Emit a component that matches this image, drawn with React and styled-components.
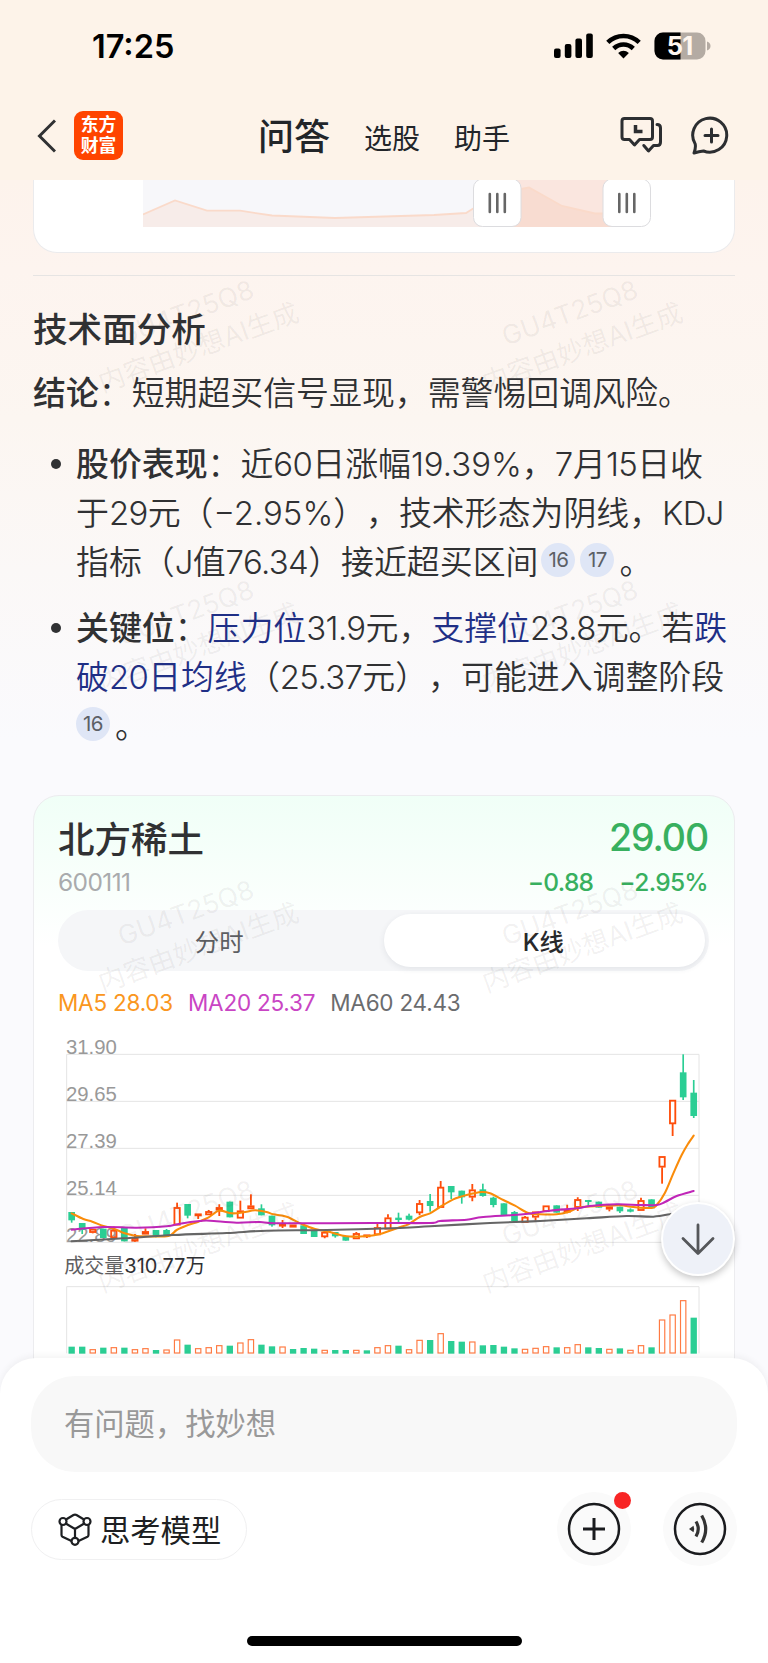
import React from "react";
import styled, { createGlobalStyle, css } from "styled-components";

const UP = "#ff4d0a";
const DOWN = "#2bce94";
const STEP = 31.63;

// [direction, body top, body bottom, high, low]
const candles = [
  ["d", 546, 571, 546, 578], ["d", 579, 600, 579, 612], ["u", 597, 608, 597, 610],
  ["d", 596, 624, 596, 624], ["u", 600, 624, 590, 624], ["d", 593, 634, 593, 634],
  ["u", 624, 634, 612, 636], ["u", 604, 613, 595, 613], ["d", 600, 618, 600, 622],
  ["d", 600, 616, 597, 616], ["u", 532, 586, 518, 586], ["d", 522, 557, 522, 565],
  ["u", 551, 557, 551, 567], ["u", 544, 555, 540, 555], ["u", 532, 541, 523, 558],
  ["d", 515, 562, 515, 562], ["u", 542, 565, 512, 565], ["u", 527, 537, 493, 537],
  ["d", 535, 556, 523, 556], ["d", 557, 586, 557, 590], ["u", 582, 588, 570, 594],
  ["u", 584, 592, 584, 592], ["d", 586, 612, 586, 612], ["d", 603, 621, 603, 621],
  ["u", 606, 621, 603, 625], ["d", 606, 619, 606, 623], ["d", 618, 632, 618, 632],
  ["u", 610, 627, 606, 627], ["u", 614, 620, 614, 624], ["u", 592, 615, 582, 615],
  ["u", 563, 598, 553, 598], ["d", 563, 570, 548, 577], ["d", 557, 569, 551, 571],
  ["u", 520, 549, 510, 556], ["d", 513, 528, 492, 545], ["u", 471, 533, 453, 533],
  ["d", 468, 487, 468, 507], ["d", 482, 502, 482, 521], ["u", 479, 502, 462, 514],
  ["d", 478, 498, 461, 500], ["d", 503, 525, 500, 532], ["d", 520, 556, 520, 556],
  ["d", 546, 573, 543, 573], ["u", 561, 578, 558, 578], ["u", 545, 562, 545, 572],
  ["u", 527, 545, 527, 545], ["d", 526, 548, 526, 548], ["u", 540, 547, 524, 550],
  ["u", 508, 533, 502, 543], ["d", 510, 516, 510, 528], ["d", 515, 533, 515, 533],
  ["u", 530, 538, 530, 544], ["d", 530, 544, 530, 549], ["d", 538, 545, 535, 547],
  ["u", 511, 542, 503, 542], ["d", 508, 535, 508, 535], ["u", 379, 412, 379, 461],
  ["u", 210, 282, 210, 318], ["d", 127, 202, 73, 210], ["d", 188, 258, 150, 264],
];

const volumes =
  "d951 d951 u958 d954 u952 d954 u958 u955 d961 u959 u929 d945 u955 u952 u946 d948 u938 u928 d945 d950 u950 d958 d955 d957 u960 d961 d961 u960 d962 u952 u946 d948 u958 u930 d931 u910 d934 d936 u935 d947 d946 d951 d956 u957 u954 u949 d953 u952 u943 d953 d955 u957 d956 u960 u946 d953 u869 u854 u811 d864"
    .split(" ")
    .map((v) => [v[0], Number(v.slice(1))]);

const ma5 = [
  [95, 550], [130, 567], [157, 575], [190, 588], [222, 596], [254, 610], [285, 617],
  [316, 619], [385, 618], [410, 600], [444, 585], [475, 575], [506, 562], [537, 542],
  [575, 550], [610, 547], [645, 541], [680, 546], [700, 553], [740, 560], [785, 582],
  [825, 597], [870, 606], [920, 619], [985, 618], [1020, 612], [1075, 593], [1105, 583],
  [1139, 561], [1170, 550], [1200, 531], [1240, 508], [1280, 495], [1325, 486],
  [1350, 490], [1390, 510], [1425, 527], [1465, 549], [1500, 553], [1550, 553],
  [1585, 546], [1620, 532], [1680, 528], [1740, 526], [1780, 531], [1835, 534],
  [1850, 525], [1875, 488], [1900, 430], [1925, 375], [1945, 340], [1961, 317],
];

const ma20 = [
  [95, 599], [190, 591], [290, 593], [380, 589], [420, 581], [480, 573], [510, 572],
  [590, 578], [660, 576], [720, 580], [1000, 579], [1170, 579], [1200, 573], [1280, 569],
  [1330, 561], [1450, 553], [1530, 542], [1610, 535], [1650, 528], [1730, 523],
  [1800, 525], [1850, 525], [1875, 516], [1910, 498], [1961, 483],
];

const ma60 = [
  [95, 634], [250, 625], [400, 615], [560, 609], [680, 602], [860, 600], [1080, 594],
  [1170, 589], [1350, 579], [1500, 573], [1640, 565], [1760, 558], [1840, 560],
  [1893, 552],
];

// Catmull-Rom to bezier
const smooth = (pts) =>
  pts.slice(1).reduce((d, p, i) => {
    const a = pts[i];
    const before = pts[i - 1] || a;
    const after = pts[i + 2] || p;
    const c1 = [a[0] + (p[0] - before[0]) / 6, a[1] + (p[1] - before[1]) / 6];
    const c2 = [p[0] - (after[0] - a[0]) / 6, p[1] - (after[1] - a[1]) / 6];
    return `${d}C${c1} ${c2} ${p}`;
  }, `M${pts[0]}`);

const GlobalStyle = createGlobalStyle`
  * { box-sizing: border-box; }
  body {
    margin: 0;
    background: #fff;
    color: #303133;
    font-family: Inter, "Noto Sans CJK SC", sans-serif;
    text-spacing-trim: space-all;
  }
`;

const Page = styled.div`
  position: relative;
  display: flex;
  flex-direction: column;
  width: 768px;
  height: 1663px;
  overflow: hidden;
  background: #fff;
`;

const Header = styled.header`
  height: 180px;
  background: #fdf3e9;
`;

const StatusBar = styled.div`
  display: flex;
  align-items: center;
  justify-content: space-between;
  height: 91px;
  padding: 0 57.5px 0 92px;
`;

const Clock = styled.span`
  padding-top: 2px;
  font-size: 32.5px;
  font-weight: 600;
  color: #000;
`;

const StatusIcons = styled.div`
  display: flex;
  align-items: center;
  gap: 12.5px;
`;

const NavBar = styled.nav`
  display: flex;
  align-items: center;
  height: 89px;
  padding: 0 36px;
`;

const Logo = styled.div`
  width: 49px;
  height: 49px;
  margin: 0 135px 0 18px;
  padding-top: 2px;
  border-radius: 9px;
  background: #ff4400;
  color: #fff;
  font: 700 17.8px/21px "Noto Sans CJK SC", sans-serif;
  text-align: center;
`;

const Tab = styled.span`
  margin-right: 34px;
  padding-top: 2px;
  font-size: 28px;
  color: #222529;
  ${(p) =>
    p.$active &&
    css`
      padding: 0 0 3px;
      font-size: 36px;
      font-weight: 500;
    `}
`;

const NavIcons = styled.div`
  display: flex;
  align-items: center;
  gap: 26px;
  margin-left: auto;
`;

const Content = styled.main`
  height: 1220px;
  padding: 0 33px;
  overflow: hidden;
  background: linear-gradient(#fdf3ec 0, #fdf4ef 90px, #fcf6f1 240px, #fbf8f7 390px, #fafafd 560px);
`;

const SliderCard = styled.section`
  height: 73px;
  padding-left: 109px;
  border: 1px solid #ebebed;
  border-top: 0;
  border-radius: 0 0 24px 24px;
  background: #fff;
`;

const Divider = styled.hr`
  height: 1px;
  margin: 22px 0 29px;
  border: 0;
  background: #e6e4e3;
`;

const Title = styled.h2`
  margin: 0 0 15px;
  font-size: 34.6px;
  font-weight: 500;
  line-height: 49px;
`;

const Line = styled.div`
  height: 49px;
  font-size: 32.9px;
  font-weight: 350;
  line-height: 49px;
  white-space: nowrap;

  b {
    font-weight: 500;
  }
`;

const Num = styled.span`
  letter-spacing: ${(p) => (p.$wide ? 0 : -0.6)}px;
`;

const List = styled.ul`
  display: grid;
  gap: 17px;
  margin: 22px 0 44px;
  padding: 0;
  list-style: none;
`;

const Item = styled.li`
  display: grid;
  grid-template-columns: 43px 1fr;

  &::before {
    content: "";
    width: 10px;
    height: 10px;
    margin: 19px 0 0 18px;
    border-radius: 50%;
    background: #303133;
  }
`;

const Keyword = styled.span`
  color: #1f2f86;
`;

const Cite = styled.span`
  display: inline-block;
  width: 34px;
  height: 34px;
  margin: 0 5px 0 ${(p) => (p.$lead ? 3 : 0)}px;
  border-radius: 50%;
  background: #dfe6f6;
  color: #5c6066;
  font-size: 20.5px;
  font-weight: 400;
  letter-spacing: -0.6px;
  line-height: 34px;
  text-align: center;
  vertical-align: 7px;
`;

const StockCard = styled.section`
  height: 640px;
  padding: 19px 26px 0 24px;
  border: 1px solid #ececef;
  border-radius: 26px;
  background: linear-gradient(#f0fff7 0, #f8fffb 80px, #fff 150px);
`;

const StockRow = styled.div`
  display: flex;
  align-items: center;
  justify-content: space-between;
  height: ${(p) => p.$height}px;
`;

const StockName = styled.span`
  font-size: 36.5px;
  font-weight: 500;
`;

const Price = styled.span`
  color: #38b05f;
  font-size: 37.5px;
  font-weight: 500;
  letter-spacing: -1.1px;
`;

const Code = styled.span`
  color: #a9abad;
  font-size: 24.5px;
  letter-spacing: -0.6px;
`;

const Change = styled.span`
  display: flex;
  gap: 26px;
  color: #38b05f;
  font-size: 24.5px;
  font-weight: 500;
  letter-spacing: -0.7px;
`;

const Segmented = styled.div`
  display: grid;
  grid-template-columns: 1fr 1fr;
  height: 61px;
  margin: 6px -1px 16px 0;
  padding: 4px;
  border-radius: 31px;
  background: #f5f6f8;
`;

const Segment = styled.span`
  display: grid;
  place-items: center;
  padding-right: 7px;
  border-radius: 27px;
  color: #5d5f63;
  font-size: 24.4px;
  ${(p) =>
    p.$active &&
    css`
      padding-right: 2px;
      background: #fff;
      color: #28292b;
      font-weight: 500;
      box-shadow: 0 2px 6px rgba(40, 50, 80, 0.09);
    `}
`;

const Legend = styled.div`
  display: flex;
  gap: 15px;
  height: 32px;
  font-size: 22.5px;
  letter-spacing: -0.22px;
  line-height: 32px;
  white-space: nowrap;
`;

const LegendItem = styled.span`
  color: ${(p) => p.$color};
`;

const Chart = styled.svg`
  display: block;
  margin: 11px 0 0 1px;
`;

const Watermarks = styled.div`
  position: absolute;
  top: 179px;
  left: 0;
  display: grid;
  grid-template-columns: 384px 384px;
  grid-auto-rows: 300px;
  pointer-events: none;
`;

const Watermark = styled.div`
  display: grid;
  place-content: center;
  color: rgba(70, 60, 60, 0.07);
  font-size: 26.5px;
  line-height: 37px;
  text-align: center;
  white-space: nowrap;
  transform: translateY(1px) rotate(-20deg);
`;

const ScrollDown = styled.button`
  position: absolute;
  top: 1202px;
  left: 661px;
  display: grid;
  place-items: center;
  width: 74px;
  height: 74px;
  padding: 0;
  border: 2px solid #fff;
  border-radius: 50%;
  background: #eef1f8;
  box-shadow: 0 3px 7px rgba(0, 0, 0, 0.22);
`;

const Sheet = styled.footer`
  position: relative;
  display: flex;
  flex-direction: column;
  align-items: center;
  height: 305px;
  margin-top: -42px;
  padding: 18px 31px 0;
  border-radius: 36px 36px 0 0;
  background: #fff;
  box-shadow: 0 -2px 7px rgba(0, 0, 0, 0.05);
`;

const Ask = styled.div`
  width: 706px;
  height: 96px;
  padding-left: 33px;
  border-radius: 44px;
  background: #f8f8f8;
  color: #999;
  font-size: 30.3px;
  line-height: 96px;
`;

const Actions = styled.div`
  display: flex;
  align-items: center;
  gap: 32px;
  width: 706px;
  margin: 20px 0 70px;
`;

const ModelButton = styled.button`
  display: flex;
  align-items: center;
  gap: 8px;
  width: 216px;
  height: 61px;
  margin: 1px auto 0 0;
  padding: 0 0 1px 26px;
  border: 1px solid #f0f0f1;
  border-radius: 31px;
  background: #fff;
  color: #1d1f22;
  font: 400 30.3px Inter, "Noto Sans CJK SC", sans-serif;
  white-space: nowrap;
`;

const RoundButton = styled.button`
  position: relative;
  width: 74px;
  height: 74px;
  padding: 0;
  border: 0;
  border-radius: 50%;
  background: #fafafa;

  svg {
    display: block;
  }
`;

const Dot = styled.i`
  position: absolute;
  top: 0;
  right: 0;
  width: 17px;
  height: 17px;
  border-radius: 50%;
  background: #f82525;
`;

const HomeIndicator = styled.div`
  width: 275px;
  height: 10px;
  border-radius: 5px;
  background: #000;
`;

function Battery() {
  return (
    <svg width="57" height="28" viewBox="0 0 57 28" overflow="visible">
      <clipPath id="shell">
        <rect x=".5" y=".5" width="51" height="27" rx="8.5" />
      </clipPath>
      <g clipPath="url(#shell)">
        <path fill="#b4aba3" d="M0 0h52v28H0z" />
        <path d="M0 0h26.5v28H0z" />
      </g>
      <path fill="#b4aba3" d="M53 9.5q3.500 1.200 3.500 4.500t-3.500 4.500z" />
      <text x="25.5" y="22.800" fill="#fff6ee" fontSize="25.500" fontWeight="700" textAnchor="middle" letterSpacing="-1">
        51
      </text>
    </svg>
  );
}

function StatusGlyphs() {
  return (
    <StatusIcons>
      <svg width="40" height="26" viewBox="0 0 40 26">
        <rect x="0" y="15.5" width="6.6" height="9.5" rx="2" />
        <rect x="10.8" y="11" width="6.6" height="14" rx="2" />
        <rect x="21.4" y="5.5" width="6.6" height="19.5" rx="2" />
        <rect x="32.2" y="0.5" width="6.6" height="24.5" rx="2" />
      </svg>
      <svg width="35" height="26" viewBox="0 0 35 26" fill="none" stroke="#000" strokeWidth="4.6">
        <path d="M1.8 9.4Q8.5 3 17.5 3t15.7 6.4" />
        <path d="M7.7 15.5Q12 11.5 17.5 11.5t9.8 4" />
        <path d="M17.5 25.5l-5.400-5.500q5.400-4.600 10.800 0z" fill="#000" stroke="none" />
      </svg>
      <Battery />
    </StatusIcons>
  );
}

function RangeSlider() {
  return (
    <svg width="520" height="48" viewBox="143 180 520 48">
      <path fill="#f7f7fa" d="M143 180h354v47H143z" />
      <path fill="#fae6df" d="M497 180h130v47H497z" />
      <path fill="#f7ece9" d="M143 214.5L175 200.5 207 210.7H240L272 215.5 335 218 434 215 466 213 474 208 497 196V227H143z" />
      <path fill="#f8dcd1" d="M497 196L521 189 529 187.5 562 206 595 213.5H627V227H497z" />
      <path
        fill="none"
        stroke="#fadaca"
        strokeWidth="1.8"
        d="M143 214.5L175 200.5 207 210.7H240L272 215.5 335 218 434 215 466 213 474 208 497 196 521 189 529 187.5 562 206 595 213.5H627"
      />
      {[473.5, 603].map((x) => (
        <g key={x}>
          <rect x={x} y="179" width="47.5" height="47.5" rx="9" fill="#fff" stroke="#dcdcdf" />
          <path
            stroke="#666"
            strokeWidth="2.6"
            strokeLinecap="round"
            d={`M${x + 16.3} 194v18m7.500-18v18m7.500-18v18`}
          />
        </g>
      ))}
    </svg>
  );
}

function KLineChart() {
  return (
    <Chart width="652" height="330" viewBox="57 0 1956 990">
      <g stroke="#e4e4e4" strokeWidth="3" fill="none">
        <path d="M80 73H1977M80 214H1977M80 355H1977M80 496H1977M80 637H1977" />
        <path d="M80 73V637M1977 73V637M80 970V770H1977V970" />
      </g>
      <g fill="#999" fontFamily="Liberation Sans, sans-serif" fontSize="61">
        {["31.90", "29.65", "27.39", "25.14", "22.89"].map((t, i) => (
          <text key={t} x="78" y={73 + i * 141}>{t}</text>
        ))}
      </g>
      {candles.map(([dir, top, bottom, high, low], i) => {
        const x = 95 + i * STEP;
        const h = bottom - top;
        return dir === "d" ? (
          <g key={i} fill={DOWN}>
            <rect x={x - 10} y={top} width="20" height={h} />
            <rect x={x - 2.5} y={high} width="5" height={low - high} />
          </g>
        ) : (
          <g key={i} stroke={UP} strokeWidth="5.5" fill="none">
            <rect x={x - 8} y={top + 2} width="16" height={Math.max(h - 4, 3)} />
            <path d={`M${x} ${high}V${top}M${x} ${bottom}V${low}`} />
          </g>
        );
      })}
      <g fill="none" strokeWidth="6.2" strokeLinecap="round">
        <path stroke="#fa8c0a" d={smooth(ma5)} />
        <path stroke="#c026b8" d={smooth(ma20)} />
        <path stroke="#666" d={smooth(ma60)} />
      </g>
      <text x="73" y="729" fontSize="60" fill="#2f3033">
        <tspan fill="#5f6062">成交量</tspan>310.77万
      </text>
      {volumes.map(([dir, top], i) => {
        const x = 95 + i * STEP;
        return dir === "d" ? (
          <rect key={i} x={x - 9.5} y={top - 1} width="19" height={972 - top} fill={DOWN} />
        ) : (
          <rect key={i} x={x - 8} y={top + 1} width="16" height={968 - top} fill="#fff" stroke="#ff7a42" strokeWidth="3.5" />
        );
      })}
    </Chart>
  );
}

function ModelIcon() {
  return (
    <svg width="34" height="34" viewBox="0 0 34 34" fill="none" stroke="#1d1f22" strokeWidth="2.2">
      <path
        d="M8 7.500L15.500 3q1.500-.9 3 0L26 7.500M8.200 11.800L17 17l8.800-5.200M17 17v9M3.500 13V23q0 1.200 1 1.800l9 4.200M30.500 13V23q0 1.200-1 1.800l-9 4.200"
        strokeLinejoin="round"
      />
      <circle cx="5" cy="9.5" r="3.5" />
      <circle cx="29" cy="9.5" r="3.5" />
      <circle cx="17" cy="29.300" r="3.5" />
    </svg>
  );
}

export default function App() {
  return (
    <Page>
      <GlobalStyle />
      <Header>
        <StatusBar>
          <Clock>17:25</Clock>
          <StatusGlyphs />
        </StatusBar>
        <NavBar>
          <svg width="20" height="34" viewBox="0 0 20 34" fill="none" stroke="#303133" strokeWidth="3">
            <path d="M19 1.5L3.5 17 19 32.5" />
          </svg>
          <Logo>
            东方
            <br />
            财富
          </Logo>
          <Tab $active>问答</Tab>
          <Tab>选股</Tab>
          <Tab>助手</Tab>
          <NavIcons>
            <svg width="46" height="40" viewBox="0 0 46 40" fill="none" stroke="#2c2e31" strokeWidth="3" strokeLinejoin="round" strokeLinecap="round">
              <path d="M6.5 2.500H32q2.5 0 2.5 2.5V21q0 2.5-2.5 2.5H21.5L16.5 29l-5-5.500H6.500Q4 23.5 4 21V5q0-2.500 2.500-2.500z" />
              <path d="M39 8.5q3.5 0 3.5 3.5V26q0 3.5-3 3.5H35.5L30.5 35l-4.700-5.500" />
              <path d="M17.500 9v6.500h7" strokeWidth="3.5" strokeLinecap="butt" strokeLinejoin="miter" />
            </svg>
            <svg width="42" height="42" viewBox="0 0 42 42" fill="none" stroke="#2c2e31" strokeWidth="3" strokeLinejoin="round" strokeLinecap="round">
              <path d="M5.200 29A17 17 0 1 1 13.500 36Q9 36.500 4 38Q6 33 5.200 29z" />
              <path d="M21.5 14v13M15 20.500h13" />
            </svg>
          </NavIcons>
        </NavBar>
      </Header>

      <Content>
        <SliderCard>
          <RangeSlider />
        </SliderCard>
        <Divider />
        <Title>技术面分析</Title>
        <Line>
          <b>结论</b>：短期超买信号显现，需警惕回调风险。
        </Line>
        <List>
          <Item>
            <div>
              <Line>
                <b>股价表现</b>：近<Num>60</Num>日涨幅<Num $wide>19.39%</Num>，<Num $wide>7</Num>月<Num>15</Num>日收
              </Line>
              <Line>
                于<Num>29</Num>元（<Num $wide>−2.95%</Num>），技术形态为阴线，<Num>KDJ</Num>
              </Line>
              <Line>
                指标（<Num>J</Num>值<Num>76.34</Num>）接近超买区间<Cite $lead>16</Cite>
                <Cite>17</Cite>。
              </Line>
            </div>
          </Item>
          <Item>
            <div>
              <Line>
                <b>关键位</b>：<Keyword>压力位</Keyword>
                <Num>31.9</Num>元，<Keyword>支撑位</Keyword>
                <Num>23.8</Num>元。若<Keyword>跌</Keyword>
              </Line>
              <Line>
                <Keyword>
                  破<Num>20</Num>日均线
                </Keyword>
                （<Num>25.37</Num>元），可能进入调整阶段
              </Line>
              <Line>
                <Cite>16</Cite>。
              </Line>
            </div>
          </Item>
        </List>

        <StockCard>
          <StockRow $height={44}>
            <StockName>北方稀土</StockName>
            <Price>29.00</Price>
          </StockRow>
          <StockRow $height={45}>
            <Code>600111</Code>
            <Change>
              <span>−0.88</span>
              <span>−2.95%</span>
            </Change>
          </StockRow>
          <Segmented>
            <Segment>分时</Segment>
            <Segment $active>K线</Segment>
          </Segmented>
          <Legend>
            <LegendItem $color="#fa9620">MA5 28.03</LegendItem>
            <LegendItem $color="#c945c4">MA20 25.37</LegendItem>
            <LegendItem $color="#6b6c6e">MA60 24.43</LegendItem>
          </Legend>
          <KLineChart />
        </StockCard>
      </Content>

      <Watermarks>
        {Array.from({ length: 8 }, (_, i) => (
          <Watermark key={i}>
            <span>GU4T25Q8</span>
            <span>内容由妙想AI生成</span>
          </Watermark>
        ))}
      </Watermarks>

      <ScrollDown>
        <svg width="34" height="34" viewBox="0 0 34 34" fill="none" stroke="#55575a" strokeWidth="2.8" strokeLinecap="round" strokeLinejoin="round">
          <path d="M17 3v28M2 16.5L17 31.5 32 16.5" />
        </svg>
      </ScrollDown>

      <Sheet>
        <Ask>有问题，找妙想</Ask>
        <Actions>
          <ModelButton>
            <ModelIcon />
            思考模型
          </ModelButton>
          <RoundButton>
            <svg width="74" height="74" viewBox="0 0 74 74" fill="none" stroke="#1a1b1e">
              <circle cx="37" cy="37" r="25" strokeWidth="2.5" />
              <path d="M37 26v22M26 37h22" strokeWidth="3" />
            </svg>
            <Dot />
          </RoundButton>
          <RoundButton>
            <svg width="74" height="74" viewBox="0 0 74 74" fill="none" stroke="#1a1b1e">
              <circle cx="37" cy="37" r="25" strokeWidth="2.5" />
              <path d="M26 37l4.500-3.200q1.400 3.200 0 6.400z" fill="#333" stroke="none" />
              <path d="M33 29.500q4.500 7.500 0 15M38.700 23.500q8 13.500 0 27" stroke="#333" strokeWidth="3.200" />
            </svg>
          </RoundButton>
        </Actions>
        <HomeIndicator />
      </Sheet>
    </Page>
  );
}
